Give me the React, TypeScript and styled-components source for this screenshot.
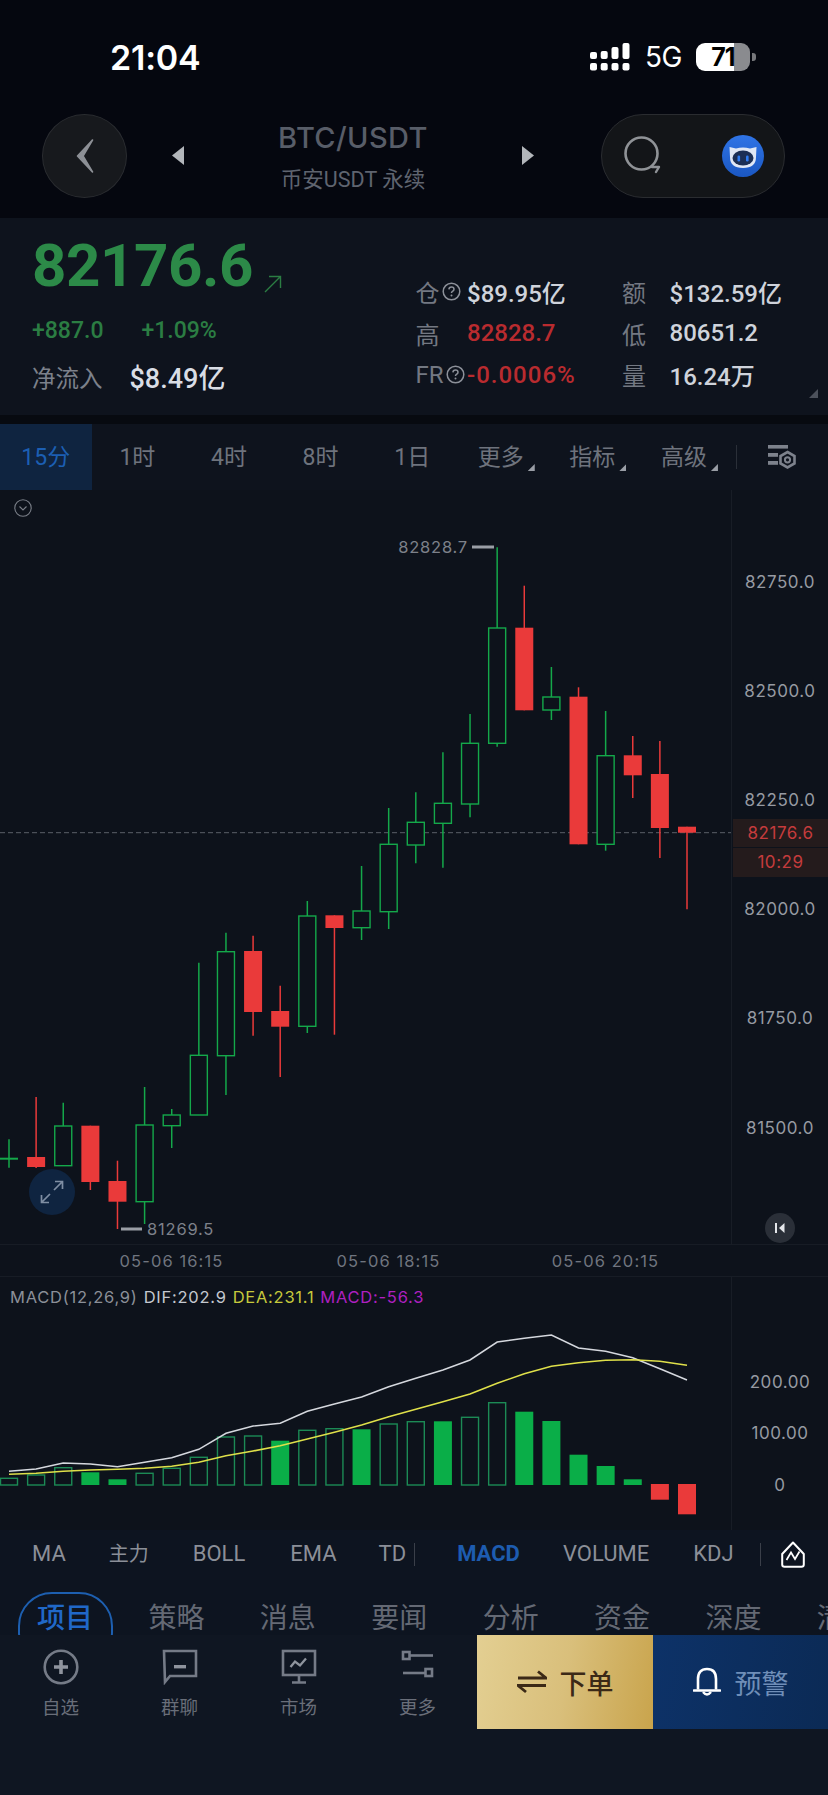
import React from "react";
import styled, { createGlobalStyle } from "styled-components";

const Global = createGlobalStyle`
  html, body { margin: 0; padding: 0; background: #0f1622; }
  body { font-family: Roboto, "Noto Sans CJK SC", sans-serif; width: 828px; overflow-x: hidden; }
  * { box-sizing: border-box; }
`;

const Page = styled.div`
  width: 828px;
  height: 1795px;
  overflow: hidden;
  display: flex;
  flex-direction: column;
  background: #0f1622;
`;

const Top = styled.div`
  height: 218px;
  background: #05070f;
  flex: none;
`;

const StatusBar = styled.div`
  height: 114px;
  display: flex;
  align-items: center;
  padding: 0 72px 0 110px;
`;

const Time = styled.div`
  font-family: Inter, sans-serif;
  font-size: 34px;
  font-weight: 600;
  letter-spacing: -0.2px;
  color: #fff;
`;

const StatusRight = styled.div`
  margin-left: auto;
  display: flex;
  align-items: center;
`;

const Net = styled.div`
  font-family: Inter, sans-serif;
  font-size: 28px;
  font-weight: 400;
  letter-spacing: -0.5px;
  color: #fff;
  margin: 0 14px 0 14px;
`;

const Battery = styled.div`
  position: relative;
  width: 54px;
  height: 28px;
  border-radius: 9px;
  overflow: hidden;
  background: linear-gradient(90deg, #fff 0 38px, #8a8b8f 38px 54px);
  color: #000;
  font-family: Inter, sans-serif;
  font-size: 25px;
  font-weight: 700;
  line-height: 28px;
  text-align: center;
  letter-spacing: -1px;
`;

const BatteryNub = styled.div`
  width: 4px;
  height: 8px;
  margin-left: 2px;
  border-radius: 0 3px 3px 0;
  background: #77787c;
`;

const Header = styled.div`
  height: 104px;
  display: flex;
  align-items: flex-start;
  padding: 0 43px 0 42px;
`;

const BackButton = styled.div`
  width: 85px;
  height: 84px;
  flex: none;
  border-radius: 50%;
  background: #17191d;
  border: 1.5px solid #2a2c30;
  display: flex;
  align-items: center;
  justify-content: center;
`;

const Arrow = styled.div<{ $dir: "left" | "right"; $gap: number }>`
  width: 12px;
  height: 19px;
  flex: none;
  margin-top: 32px;
  margin-left: ${(p) => p.$gap}px;
  background: #b3b6bb;
  clip-path: ${(p) =>
    p.$dir === "left"
      ? "polygon(100% 0, 100% 100%, 0 50%)"
      : "polygon(0 0, 100% 50%, 0 100%)"};
`;

const TitleBlock = styled.div`
  flex: 1;
  display: flex;
  flex-direction: column;
  align-items: center;
  margin-top: 7px;
`;

const Pair = styled.div`
  font-family: Inter, sans-serif;
  font-size: 29px;
  line-height: 34px;
  font-weight: 500;
  letter-spacing: 0.4px;
  color: #585d68;
`;

const Venue = styled.div`
  font-size: 21.5px;
  line-height: 28px;
  margin-top: 11px;
  color: #5f646f;
`;

const ToolPill = styled.div`
  width: 184px;
  height: 84px;
  flex: none;
  margin-left: 67px;
  border-radius: 42px;
  background: #131518;
  border: 1.5px solid #2a2c30;
  display: flex;
  align-items: center;
  justify-content: space-between;
  padding: 0 20px 0 21px;
`;

const Ticker = styled.div`
  height: 197px;
  flex: none;
  background: #0e131d;
  display: flex;
  position: relative;
  padding-left: 32px;
`;

const Corner = styled.div`
  position: absolute;
  right: 10px;
  bottom: 17px;
  width: 9px;
  height: 9px;
  background: #4c515b;
  clip-path: polygon(100% 0, 100% 100%, 0 100%);
`;

const TickerLeft = styled.div`
  width: 383.5px;
  flex: none;
  display: flex;
  flex-direction: column;
`;

const PriceRow = styled.div`
  display: flex;
  align-items: flex-end;
  margin-top: 17px;
  height: 62px;
`;

const Price = styled.div`
  font-size: 60px;
  line-height: 62px;
  font-weight: 700;
  letter-spacing: -0.4px;
  color: #2c8a48;
`;

const ChangeRow = styled.div`
  display: flex;
  gap: 38px;
  margin-top: 20px;
  font-size: 23px;
  line-height: 27px;
  font-weight: 500;
  color: #2b7d43;
`;

const FlowRow = styled.div`
  display: flex;
  align-items: center;
  gap: 27px;
  margin-top: 18px;
  line-height: 34px;
`;

const FlowLabel = styled.span`
  font-size: 23.5px;
  color: #7c818b;
`;

const FlowValue = styled.span`
  font-size: 27px;
  font-weight: 500;
  color: #d9dde5;
`;

const StatsGrid = styled.div`
  display: grid;
  grid-template-columns: 206.5px 1fr;
  grid-auto-rows: 41.5px;
  margin-top: 53px;
  height: 125px;
`;

const Stat = styled.div`
  display: flex;
  align-items: center;
`;

const StatLabel = styled.div<{ $w: number }>`
  min-width: ${(p) => p.$w}px;
  display: flex;
  align-items: center;
  gap: 2px;
  font-size: 24px;
  color: #737882;
`;

const StatValue = styled.div<{ $red?: boolean; $spread?: boolean }>`
  font-size: 24px;
  font-weight: 500;
  letter-spacing: ${(p) => (p.$spread ? "1px" : "0")};
  color: ${(p) => (p.$red ? "#b92b2f" : "#cfd3db")};
`;

const Gap = styled.div`
  height: 9px;
  flex: none;
  background: #070a10;
`;

const Tabs = styled.div`
  height: 66px;
  flex: none;
  background: #0e131d;
  display: flex;
  align-items: stretch;
`;

const Tab = styled.div<{ $active?: boolean; $caret?: boolean }>`
  width: 91.6px;
  flex: none;
  display: flex;
  align-items: center;
  justify-content: center;
  padding-bottom: 4px;
  padding-right: ${(p) => (p.$caret ? "6px" : "0")};
  font-size: 23px;
  color: ${(p) => (p.$active ? "#1c5fb3" : "#6e737d")};
  background: ${(p) => (p.$active ? "#0f2440" : "transparent")};
`;

const TabText = styled.span<{ $caret?: boolean }>`
  position: relative;
  &::after {
    content: "";
    display: ${(p) => (p.$caret ? "block" : "none")};
    position: absolute;
    left: calc(100% + 4px);
    bottom: 1px;
    width: 7px;
    height: 7px;
    background: #9a9ea6;
    clip-path: polygon(100% 0, 100% 100%, 0 100%);
  }
`;

const TabDivider = styled.div`
  width: 1px;
  height: 24px;
  flex: none;
  align-self: center;
  margin: 0 0 0 3.5px;
  background: #2a2f38;
`;

const TabIcon = styled.div`
  flex: 1;
  display: flex;
  align-items: center;
  justify-content: center;
  padding-right: 2px;
`;

const ChartRow = styled.div`
  height: 755px;
  flex: none;
  display: grid;
  grid-template-columns: 732px 96px;
  background: #0d121b;
  border-bottom: 1px solid #171c25;
  position: relative;
`;

const Plot = styled.div`
  position: relative;
  border-right: 1px solid #181d26;
  svg { display: block; }
`;

const Axis = styled.div<{ $top: number }>`
  position: relative;
  padding-top: ${(p) => p.$top}px;
  display: flex;
  flex-direction: column;
`;

const AxisLabel = styled.div<{ $h: number }>`
  height: ${(p) => p.$h}px;
  flex: none;
  display: flex;
  align-items: center;
  justify-content: center;
  font-family: Inter, sans-serif;
  font-size: 17px;
  letter-spacing: 0.55px;
  color: #969aa2;
`;

const PriceTag = styled.div`
  position: absolute;
  top: 328.5px;
  left: 1px;
  right: 0;
  display: flex;
  flex-direction: column;
  gap: 1px;
`;

const PriceTagCell = styled.div<{ $h: number }>`
  height: ${(p) => p.$h}px;
  background: #241b1c;
  display: flex;
  align-items: center;
  justify-content: center;
  font-family: Inter, sans-serif;
  font-size: 17px;
  letter-spacing: 0.55px;
  color: #c53b3c;
`;

const CollapseMark = styled.div`
  position: absolute;
  left: 14px;
  top: 9px;
  line-height: 0;
`;

const ExpandButton = styled.div`
  position: absolute;
  left: 29px;
  top: 679px;
  width: 46px;
  height: 46px;
  border-radius: 50%;
  background: #0f2440;
  display: flex;
  align-items: center;
  justify-content: center;
`;

const SkipButton = styled.div`
  position: absolute;
  right: 33px;
  top: 723px;
  width: 30px;
  height: 30px;
  border-radius: 50%;
  background: #2a2f38;
  display: flex;
  align-items: center;
  justify-content: center;
`;

const DateRow = styled.div`
  height: 32px;
  flex: none;
  display: flex;
  align-items: center;
  padding-left: 63px;
  background: #0d121b;
  border-bottom: 1px solid #171c25;
`;

const DateLabel = styled.div`
  width: 217px;
  flex: none;
  text-align: center;
  font-family: Inter, sans-serif;
  font-size: 16.5px;
  letter-spacing: 1.1px;
  color: #70757f;
`;

const MacdRow = styled.div`
  height: 253px;
  flex: none;
  display: grid;
  grid-template-columns: 732px 96px;
  background: #0d121b;
`;

const Legend = styled.div`
  position: absolute;
  left: 10px;
  top: 9px;
  display: flex;
  gap: 6px;
  font-family: Inter, sans-serif;
  font-size: 16.5px;
  letter-spacing: 0.75px;
  line-height: 22px;
  white-space: nowrap;
`;

const LegendItem = styled.span<{ $color: string }>`
  color: ${(p) => p.$color};
`;

const Indicators = styled.div`
  height: 48px;
  flex: none;
  position: relative;
  display: flex;
  align-items: center;
  background: #0d1420;
  padding-left: 32px;
`;

const Indicator = styled.div<{ $active?: boolean; $left: number; $cjk?: boolean }>`
  margin-left: ${(p) => p.$left}px;
  font-size: ${(p) => (p.$cjk ? "20px" : "22px")};
  line-height: 28px;
  height: 28px;
  font-weight: ${(p) => (p.$active ? 700 : 400)};
  color: ${(p) => (p.$active ? "#1d5cb0" : "#8b8f98")};
  white-space: nowrap;
`;

const IndicatorDivider = styled.div<{ $left: number }>`
  width: 1px;
  height: 23px;
  margin-left: ${(p) => p.$left}px;
  background: #3a3f49;
`;

const IndicatorIcon = styled.div`
  margin-left: 20px;
  line-height: 0;
`;

const News = styled.div`
  height: 57px;
  flex: none;
  background: #0d1420;
  overflow: hidden;
  display: flex;
  padding-left: 37px;
  padding-top: 21px;
  gap: 55.4px;
  position: relative;
`;

const NewsTab = styled.div<{ $active?: boolean }>`
  flex: none;
  position: relative;
  font-size: 28px;
  line-height: 40px;
  height: 40px;
  color: ${(p) => (p.$active ? "#2068c8" : "#646974")};
  font-weight: ${(p) => (p.$active ? 500 : 400)};
  &::before {
    content: "";
    display: ${(p) => (p.$active ? "block" : "none")};
    position: absolute;
    left: -19px;
    top: -7px;
    width: 91px;
    height: 70px;
    border: 2px solid #1d5fb0;
    border-radius: 34px;
  }
`;

const Footer = styled.div`
  height: 94px;
  flex: none;
  display: flex;
  background: #0f1622;
`;

const NavGroup = styled.div`
  width: 477px;
  flex: none;
  display: flex;
  padding-left: 1px;
`;

const NavItem = styled.div`
  width: 119px;
  flex: none;
  display: flex;
  flex-direction: column;
  align-items: center;
  padding-top: 14px;
`;

const NavIcon = styled.div`
  height: 36px;
  line-height: 0;
`;

const NavLabel = styled.div`
  margin-top: 10px;
  font-size: 18.5px;
  line-height: 26px;
  color: #696e79;
`;

const OrderButton = styled.div`
  width: 176px;
  flex: none;
  display: flex;
  align-items: center;
  justify-content: center;
  gap: 13px;
  background: linear-gradient(100deg, #e3cf92 0%, #d9bf7b 50%, #c9a44c 100%);
  font-size: 27px;
  font-weight: 500;
  color: #3b2917;
`;

const AlertButton = styled.div`
  flex: 1;
  display: flex;
  align-items: center;
  justify-content: center;
  gap: 14px;
  background: linear-gradient(100deg, #0d3268 0%, #0b2a55 100%);
  font-size: 27px;
  color: #6f8eb8;
`;

const Rest = styled.div`
  flex: 1;
  background: #0f1622;
`;

type C = [number, number, number, number, number, boolean];
// body-top, body-bottom, wick-top, wick-bottom, index, isRed
const candles: C[] = [
  [1157.7, 1159.7, 1139.3, 1167.7, 0, false],
  [1157, 1167, 1097, 1168, 1, true],
  [1126, 1165.7, 1102.7, 1165.7, 2, false],
  [1125.7, 1182, 1125.7, 1190, 3, true],
  [1181, 1201.7, 1160.7, 1229, 4, true],
  [1125, 1201.7, 1087, 1224, 5, false],
  [1115, 1125.7, 1109, 1148, 6, false],
  [1055.3, 1115, 962.7, 1115, 7, false],
  [951.7, 1055.7, 932.7, 1095, 8, false],
  [951, 1012, 935.7, 1035.7, 9, true],
  [1011, 1026.7, 985.7, 1077, 10, true],
  [916, 1026.3, 901, 1033, 11, false],
  [915.3, 928, 915.3, 1034.7, 12, true],
  [911, 927.7, 866, 940, 13, false],
  [844.3, 911.7, 808, 929, 14, false],
  [822.3, 845, 792.3, 863.3, 15, false],
  [803.3, 823.3, 752.3, 867.7, 16, false],
  [743.3, 804, 714, 817.3, 17, false],
  [628, 743.3, 547.3, 746.7, 18, false],
  [627.7, 710.3, 585.7, 710.3, 19, true],
  [697, 710, 667, 720, 20, false],
  [696.7, 844.3, 687.3, 844.3, 21, true],
  [755.7, 844.3, 711, 850.7, 22, false],
  [755.3, 775.3, 736, 798, 23, true],
  [774, 828, 741, 858, 24, true],
  [826.7, 832.7, 826.7, 909.3, 25, true],
];

const cx = (i: number) => 9 + 27.12 * i;

const GREEN = "#14a84a";
const RED = "#ea3a3a";

type B = [number, number, boolean, boolean];
// top, bottom, filled, red
const bars: B[] = [
  [1478.3, 1485, false, false],
  [1475, 1485, false, false],
  [1467.7, 1485, false, false],
  [1472.3, 1485, true, false],
  [1479.3, 1485, true, false],
  [1473.3, 1485, false, false],
  [1468.3, 1485, false, false],
  [1457.3, 1485, false, false],
  [1437, 1485, false, false],
  [1436, 1485, false, false],
  [1440.7, 1485, true, false],
  [1430.3, 1485, false, false],
  [1428.7, 1485, false, false],
  [1429.3, 1485, true, false],
  [1424, 1485, false, false],
  [1421.7, 1485, false, false],
  [1421.3, 1485, true, false],
  [1417.3, 1485, false, false],
  [1402.7, 1485, false, false],
  [1411.7, 1485, true, false],
  [1421, 1485, true, false],
  [1454.7, 1485, true, false],
  [1466, 1485, true, false],
  [1479.3, 1485, true, false],
  [1484, 1499.7, true, true],
  [1484, 1514.3, true, true],
];

const difV = [604, 597, 579, 582, 590, 577, 563, 538, 490, 468, 460, 424, 402, 381, 350, 325, 300, 270, 216, 205, 195, 234, 244, 263, 296, 330];
const deaV = [613, 610, 604, 600, 598, 595, 589, 577, 557, 543, 527, 507, 487, 465, 440, 418, 395, 372, 340, 311, 289, 278, 271, 269, 274, 286];
const toPts = (a: number[]) => a.map((v, i) => `${cx(i).toFixed(1)},${(1270 + v / 3).toFixed(1)}`).join(" ");

const CandleChart = () => (
  <svg width="731" height="755" viewBox="0 490 731 755">
    <line x1="0" y1="832.7" x2="731" y2="832.7" stroke="#5a5f68" strokeWidth="1" strokeDasharray="5 3" />
    {candles.map(([t, b, wt, wb, i, red]) => {
      const x = cx(i);
      const color = red ? RED : GREEN;
      return (
        <g key={i}>
          <line x1={x} y1={wt} x2={x} y2={wb} stroke={color} strokeWidth="1.5" />
          {red || i === 0 ? (
            <rect x={x - 9} y={t} width="18" height={b - t} fill={color} />
          ) : (
            <rect x={x - 8.5} y={t} width="17" height={b - t} fill="#0d121b" stroke={color} strokeWidth="1.4" />
          )}
        </g>
      );
    })}
    <rect x="472" y="545.5" width="22" height="3" fill="#9a9ea6" />
    <text x="468" y="552.5" textAnchor="end" fontFamily="Inter, sans-serif" fontSize="16.5" letterSpacing="0.8" fill="#7d818a">82828.7</text>
    <rect x="121" y="1227.5" width="21" height="3" fill="#9a9ea6" />
    <text x="147" y="1235" fontFamily="Inter, sans-serif" fontSize="16.5" letterSpacing="0.8" fill="#7d818a">81269.5</text>
  </svg>
);

const MacdChart = () => (
  <svg width="731" height="253" viewBox="0 1277 731 253">
    {bars.map(([t, b, filled, red], i) => {
      const x = cx(i);
      return filled ? (
        <rect key={i} x={x - 9} y={t} width="18" height={b - t} fill={red ? RED : "#0aae48"} />
      ) : (
        <rect key={i} x={x - 8.5} y={t} width="17" height={b - t} fill="none" stroke="#1c8a55" strokeWidth="1.4" />
      );
    })}
    <polyline points={toPts(difV)} fill="none" stroke="#d5d8de" strokeWidth="1.5" />
    <polyline points={toPts(deaV)} fill="none" stroke="#dfe04a" strokeWidth="1.6" />
  </svg>
);

const Chevron = () => (
  <svg width="20" height="36" viewBox="0 0 20 36">
    <path d="M17.5 2 L2.5 18 L17.5 34 L8 18 Z" fill="#8d9096" stroke="#8d9096" strokeWidth="1.6" strokeLinejoin="round" />
  </svg>
);

const SearchIcon = () => (
  <svg width="42" height="42" viewBox="0 0 42 42">
    <circle cx="18.5" cy="18.5" r="16" fill="none" stroke="#8f9296" strokeWidth="2.6" />
    <path d="M29 32 L36 32 L33 37" fill="none" stroke="#8f9296" strokeWidth="2.4" strokeLinecap="round" strokeLinejoin="round" />
  </svg>
);

const RobotLogo = () => (
  <svg width="42" height="42" viewBox="0 0 42 42">
    <defs>
      <linearGradient id="bot" x1="0" y1="0" x2="0" y2="1">
        <stop offset="0" stopColor="#2f74e6" />
        <stop offset="1" stopColor="#1a57c2" />
      </linearGradient>
    </defs>
    <circle cx="21" cy="21" r="21" fill="url(#bot)" />
    <path d="M7.5 12 L14 13.6 Q21 11.5 28 13.6 L34.5 12 L34 22 Q34 33 21 33 Q8 33 8 22 Z" fill="#dfe7f5" />
    <ellipse cx="21" cy="23" rx="10.5" ry="7.5" fill="#1c2f55" />
    <rect x="15.5" y="20.5" width="2.6" height="6" rx="1.3" fill="#2f7bf0" />
    <rect x="24" y="20.5" width="2.6" height="6" rx="1.3" fill="#2f7bf0" />
  </svg>
);

const Signal = () => (
  <svg width="41" height="28" viewBox="0 0 41 28" style={{ display: "block" }}>
    {[
      [0, 9],
      [10.7, 8],
      [21.5, 4],
      [32.5, 0],
    ].map(([x, y]) => (
      <g key={x} fill="#fff">
        <rect x={x} y={y} width="7" height={16 - y} rx="2" />
        <rect x={x} y="20" width="7" height="7.5" rx="2" />
      </g>
    ))}
  </svg>
);

const Help = () => (
  <svg width="19" height="19" viewBox="0 0 19 19">
    <circle cx="9.5" cy="9.5" r="8.3" fill="none" stroke="#8c9099" strokeWidth="1.5" />
    <path d="M6.9 7.4 Q7 5 9.5 5 Q12 5 12 7.2 Q12 8.6 10.4 9.4 Q9.5 9.9 9.5 11" fill="none" stroke="#8c9099" strokeWidth="1.5" />
    <circle cx="9.5" cy="13.6" r="1" fill="#8c9099" />
  </svg>
);

const UpRight = () => (
  <svg width="18" height="18" viewBox="0 0 18 18" style={{ margin: "0 0 4px 11px", flex: "none" }}>
    <path d="M1 17 L16.5 1.5 M5 1.5 H16.5 V13" fill="none" stroke="#2b7d43" strokeWidth="1.4" />
  </svg>
);

const Settings = () => (
  <svg width="28" height="24" viewBox="0 0 28 24">
    <g fill="#7d828c">
      <rect x="0" y="0" width="20" height="3.6" />
      <rect x="0" y="8" width="10" height="3.8" />
      <rect x="0" y="16" width="10" height="3.8" />
    </g>
    <path d="M19.5 7 L26.5 11 V18.5 L19.5 22.5 L12.5 18.5 V11 Z" fill="none" stroke="#7d828c" strokeWidth="2.6" />
    <circle cx="19.5" cy="14.8" r="2.6" fill="none" stroke="#7d828c" strokeWidth="2" />
  </svg>
);

const CollapseIcon = () => (
  <svg width="18" height="18" viewBox="0 0 18 18">
    <circle cx="9" cy="9" r="8.2" fill="none" stroke="#7a7f88" strokeWidth="1.1" />
    <path d="M5.5 7.5 L9 11 L12.5 7.5" fill="none" stroke="#7a7f88" strokeWidth="1.1" />
  </svg>
);

const ExpandIcon = () => (
  <svg width="24" height="24" viewBox="0 0 24 24">
    <path d="M14 10 L22.5 1.5 M15 1.5 H22.5 V9 M10 14 L1.5 22.5 M9 22.5 H1.5 V15" fill="none" stroke="#7f8ea3" strokeWidth="1.7" />
  </svg>
);

const SkipIcon = () => (
  <svg width="14" height="14" viewBox="0 0 14 14">
    <rect x="2" y="2" width="2" height="10" fill="#e4e6ea" />
    <path d="M11.5 2 L6 7 L11.5 12 Z" fill="#e4e6ea" />
  </svg>
);

const ChartShape = () => (
  <svg width="24" height="27" viewBox="0 0 24 27">
    <path d="M12 1.5 L22.8 13 V23.5 Q22.8 25.7 20.5 25.7 H3.5 Q1.2 25.7 1.2 23.5 V13 Z" fill="none" stroke="#fff" strokeWidth="2" strokeLinejoin="round" />
    <path d="M5.5 19 L10 11.5 L14 18 L18.5 10.5" fill="none" stroke="#fff" strokeWidth="1.7" />
  </svg>
);

const PlusIcon = () => (
  <svg width="36" height="36" viewBox="0 0 36 36">
    <circle cx="18" cy="18" r="16.3" fill="none" stroke="#757b87" strokeWidth="2.6" />
    <path d="M18 11 V25 M11 18 H25" stroke="#8f949e" strokeWidth="3.6" />
  </svg>
);

const ChatIcon = () => (
  <svg width="36" height="36" viewBox="0 0 36 36">
    <path d="M2 2 H34 V27 H8 L3 33 Z" fill="none" stroke="#757b87" strokeWidth="2.6" strokeLinejoin="miter" />
    <rect x="12" y="16" width="12" height="3.4" fill="#8f949e" />
  </svg>
);

const ScreenIcon = () => (
  <svg width="36" height="36" viewBox="0 0 36 36">
    <rect x="2" y="2" width="32" height="24" fill="none" stroke="#757b87" strokeWidth="2.6" />
    <path d="M18 26 V33 M11 33.5 H25" stroke="#757b87" strokeWidth="2.6" />
    <path d="M9.5 18 L14 12.5 L19 16.5 L25 9.5" fill="none" stroke="#8f949e" strokeWidth="2.3" />
  </svg>
);

const SlidersIcon = () => (
  <svg width="36" height="36" viewBox="0 0 36 36">
    <g fill="none" stroke="#757b87" strokeWidth="2.6">
      <rect x="3" y="3" width="6.5" height="7" />
      <path d="M10 6.5 H33" />
      <path d="M3 24 H25" />
      <rect x="25.5" y="20" width="6.5" height="7" />
    </g>
  </svg>
);

const SwapIcon = () => (
  <svg width="30" height="24" viewBox="0 0 30 24" style={{ flex: "none" }}>
    <path d="M1 8 H29 L21 1.5 M29 15.5 H1 L9 22" fill="none" stroke="#3b2917" strokeWidth="2.8" />
  </svg>
);

const BellIcon = () => (
  <svg width="28" height="30" viewBox="0 0 28 30" style={{ flex: "none" }}>
    <path d="M5 22.5 V12 Q5 2 14 2 Q23 2 23 12 V22.5" fill="none" stroke="#fff" strokeWidth="2.6" />
    <path d="M1 23.5 H27" stroke="#fff" strokeWidth="2.6" strokeLinecap="round" />
    <path d="M10 25 Q14 30 18 25" fill="none" stroke="#fff" strokeWidth="2.4" />
  </svg>
);

const tabs = ["15分", "1时", "4时", "8时", "1日", "更多", "指标", "高级"];
const chartAxis = ["82750.0", "82500.0", "82250.0", "82000.0", "81750.0", "81500.0"];
const newsTabs = ["项目", "策略", "消息", "要闻", "分析", "资金", "深度", "清算"];
const dates = ["05-06 16:15", "05-06 18:15", "05-06 20:15"];

export default function App() {
  return (
    <Page>
      <Global />
      <Top>
        <StatusBar>
          <Time>21:04</Time>
          <StatusRight>
            <Signal />
            <Net>5G</Net>
            <Battery>71</Battery>
            <BatteryNub />
          </StatusRight>
        </StatusBar>
        <Header>
          <BackButton>
            <Chevron />
          </BackButton>
          <Arrow $dir="left" $gap={45} />
          <TitleBlock>
            <Pair>BTC/USDT</Pair>
            <Venue>币安USDT 永续</Venue>
          </TitleBlock>
          <Arrow $dir="right" $gap={0} />
          <ToolPill>
            <SearchIcon />
            <RobotLogo />
          </ToolPill>
        </Header>
      </Top>
      <Ticker>
        <TickerLeft>
          <PriceRow>
            <Price>82176.6</Price>
            <UpRight />
          </PriceRow>
          <ChangeRow>
            <span>+887.0</span>
            <span>+1.09%</span>
          </ChangeRow>
          <FlowRow>
            <FlowLabel>净流入</FlowLabel>
            <FlowValue>$8.49亿</FlowValue>
          </FlowRow>
        </TickerLeft>
        <StatsGrid>
          <Stat>
            <StatLabel $w={51.5}>仓<Help /></StatLabel>
            <StatValue>$89.95亿</StatValue>
          </Stat>
          <Stat>
            <StatLabel $w={47.5}>额</StatLabel>
            <StatValue>$132.59亿</StatValue>
          </Stat>
          <Stat>
            <StatLabel $w={51.5}>高</StatLabel>
            <StatValue $red>82828.7</StatValue>
          </Stat>
          <Stat>
            <StatLabel $w={47.5}>低</StatLabel>
            <StatValue>80651.2</StatValue>
          </Stat>
          <Stat>
            <StatLabel $w={51.5}>FR<Help /></StatLabel>
            <StatValue $red $spread>-0.0006%</StatValue>
          </Stat>
          <Stat>
            <StatLabel $w={47.5}>量</StatLabel>
            <StatValue>16.24万</StatValue>
          </Stat>
        </StatsGrid>
        <Corner />
      </Ticker>
      <Gap />
      <Tabs>
        {tabs.map((t, i) => (
          <Tab key={t} $active={i === 0} $caret={i >= 5}>
            <TabText $caret={i >= 5}>{t}</TabText>
          </Tab>
        ))}
        <TabDivider />
        <TabIcon>
          <Settings />
        </TabIcon>
      </Tabs>
      <ChartRow>
        <Plot>
          <CandleChart />
          <CollapseMark>
            <CollapseIcon />
          </CollapseMark>
          <ExpandButton>
            <ExpandIcon />
          </ExpandButton>
        </Plot>
        <Axis $top={37}>
          {chartAxis.map((a) => (
            <AxisLabel key={a} $h={109.2}>{a}</AxisLabel>
          ))}
          <PriceTag>
            <PriceTagCell $h={28}>82176.6</PriceTagCell>
            <PriceTagCell $h={29}>10:29</PriceTagCell>
          </PriceTag>
          <SkipButton>
            <SkipIcon />
          </SkipButton>
        </Axis>
      </ChartRow>
      <DateRow>
        {dates.map((d) => (
          <DateLabel key={d}>{d}</DateLabel>
        ))}
      </DateRow>
      <MacdRow>
        <Plot>
          <MacdChart />
          <Legend>
            <LegendItem $color="#8b8f98">MACD(12,26,9)</LegendItem>
            <LegendItem $color="#c4c8cf">DIF:202.9</LegendItem>
            <LegendItem $color="#c6c93c">DEA:231.1</LegendItem>
            <LegendItem $color="#ae20c0">MACD:-56.3</LegendItem>
          </Legend>
        </Plot>
        <Axis $top={78.9}>
          {["200.00", "100.00", "0"].map((a) => (
            <AxisLabel key={a} $h={51.6}>{a}</AxisLabel>
          ))}
        </Axis>
      </MacdRow>
      <Indicators>
        <Indicator $left={0}>MA</Indicator>
        <Indicator $left={43} $cjk>主力</Indicator>
        <Indicator $left={44}>BOLL</Indicator>
        <Indicator $left={45}>EMA</Indicator>
        <Indicator $left={42}>TD</Indicator>
        <IndicatorDivider $left={8} />
        <Indicator $active $left={42}>MACD</Indicator>
        <Indicator $left={43}>VOLUME</Indicator>
        <Indicator $left={44}>KDJ</Indicator>
        <IndicatorDivider $left={26} />
        <IndicatorIcon>
          <ChartShape />
        </IndicatorIcon>
      </Indicators>
      <News>
        {newsTabs.map((t, i) => (
          <NewsTab key={t} $active={i === 0}>{t}</NewsTab>
        ))}
      </News>
      <Footer>
        <NavGroup>
          <NavItem>
            <NavIcon><PlusIcon /></NavIcon>
            <NavLabel>自选</NavLabel>
          </NavItem>
          <NavItem>
            <NavIcon><ChatIcon /></NavIcon>
            <NavLabel>群聊</NavLabel>
          </NavItem>
          <NavItem>
            <NavIcon><ScreenIcon /></NavIcon>
            <NavLabel>市场</NavLabel>
          </NavItem>
          <NavItem>
            <NavIcon><SlidersIcon /></NavIcon>
            <NavLabel>更多</NavLabel>
          </NavItem>
        </NavGroup>
        <OrderButton>
          <SwapIcon />
          下单
        </OrderButton>
        <AlertButton>
          <BellIcon />
          预警
        </AlertButton>
      </Footer>
      <Rest />
    </Page>
  );
}
